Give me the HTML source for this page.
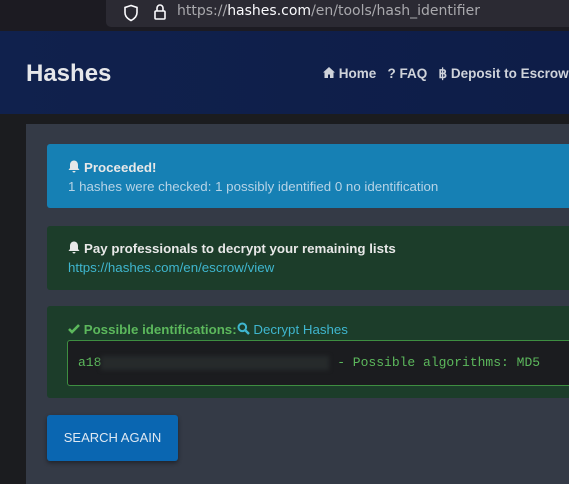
<!DOCTYPE html>
<html><head><style>
body{margin:0;width:569px;height:478px;overflow:hidden;background:#1b1c1f;font-family:"Liberation Sans",sans-serif;position:relative}
.bar{position:absolute;left:0;top:0;width:569px;height:31px;background:#1c1b22}
.url{position:absolute;left:106px;top:0;width:470px;height:27px;background:#2b2a33;border-radius:0 0 0 5px}
.url span{position:absolute;left:71px;top:3px;font-family:"DejaVu Sans",sans-serif;font-size:14px;color:#a9a9ad}
.url b{color:#fbfbfe;font-weight:normal}
.hdr{position:absolute;left:0;top:31px;width:569px;height:83px;background:linear-gradient(90deg,#10214d,#0e1d48);}
.logo{position:absolute;left:26px;top:60px;font-size:24px;font-weight:bold;color:#e6e7ea}
.nav{position:absolute;left:323px;top:66px;font-size:13.5px;font-weight:bold;color:#cfd3da;white-space:nowrap}
.panel{position:absolute;left:26px;top:124px;width:560px;height:360px;background:#343a46}
.al{position:absolute;left:47px;width:540px;border-radius:3px;font-size:13.3px}
.b{font-weight:bold;color:#e8e8e8}
.bell{display:inline-block;vertical-align:-1px;margin-right:4px}
</style></head><body>
<div class="bar"><div class="url">
<svg style="position:absolute;left:17px;top:4px" width="16" height="18" viewBox="0 0 16 18"><path d="M8 1.5L2 3.5v5c0 4 3 6.5 6 8 3-1.5 6-4 6-8v-5z" fill="none" stroke="#fbfbfe" stroke-width="1.6"/></svg>
<svg style="position:absolute;left:47px;top:3px" width="14" height="18" viewBox="0 0 14 18"><rect x="2" y="8" width="10" height="8" rx="1" fill="none" stroke="#fbfbfe" stroke-width="1.6"/><path d="M4 8V5a3 3 0 0 1 6 0v3" fill="none" stroke="#fbfbfe" stroke-width="1.6"/></svg>
<span>https://<b>hashes.com</b>/en/tools/hash_identifier</span></div></div>
<div class="hdr"></div>
<div class="logo">Hashes</div>
<div class="nav"><svg width="12" height="11" viewBox="0 0 12 11" style="vertical-align:0"><path d="M6 0L0 5.5h1.5V11h3.5V7.5h2V11h3.5V5.5H12z" fill="#cfd3da"/></svg> Home &nbsp;&nbsp;? FAQ &nbsp;&nbsp;฿ Deposit to Escrow</div>
<div class="panel"></div>
<div class="al" style="top:144px;height:64px;background:#1680b4">
<div style="position:absolute;left:21px;top:16px" class="b"><svg class="bell" width="12" height="13" viewBox="0 0 12 13"><path d="M6 0.5c-2.5 0-4 2-4 4.5v3L0.5 10h11L10 8V5c0-2.5-1.5-4.5-4-4.5z M4.5 11h3a1.5 1.5 0 0 1-3 0z" fill="#e8e8e8"/></svg>Proceeded!</div>
<div style="position:absolute;left:21px;top:35px;color:#b6d3e6">1 hashes were checked: 1 possibly identified 0 no identification</div></div>
<div class="al" style="top:226px;height:64px;background:#1c3d2a">
<div style="position:absolute;left:21px;top:15px" class="b"><svg class="bell" width="12" height="13" viewBox="0 0 12 13"><path d="M6 0.5c-2.5 0-4 2-4 4.5v3L0.5 10h11L10 8V5c0-2.5-1.5-4.5-4-4.5z M4.5 11h3a1.5 1.5 0 0 1-3 0z" fill="#e8e8e8"/></svg>Pay professionals to decrypt your remaining lists</div>
<div style="position:absolute;left:21px;top:34px;color:#3fb6cf">https://hashes.com/en/escrow/view</div></div>
<div class="al" style="top:306px;height:92px;background:#1c3d2a">
<div style="position:absolute;left:21px;top:16px;color:#5cb85c;font-weight:bold"><svg width="12" height="11" viewBox="0 0 12 11" style="vertical-align:0"><path d="M1 6l3 3 7-7" fill="none" stroke="#5cb85c" stroke-width="2.6"/></svg> Possible identifications:<svg width="13" height="13" viewBox="0 0 13 13" style="vertical-align:-1px"><circle cx="5.3" cy="5.3" r="3.8" fill="none" stroke="#3fb6cf" stroke-width="2"/><path d="M8 8l4 4" stroke="#3fb6cf" stroke-width="2.4"/></svg><span style="color:#3fb6cf;font-weight:normal"> Decrypt Hashes</span></div>
<div style="position:absolute;left:20px;top:34px;width:520px;height:44px;background:#1b1c1f;border:1px solid #3e8e41;border-radius:3px;font-family:'Liberation Mono',monospace;font-size:13px;color:#5cb85c">
<span style="position:absolute;left:10px;top:14px;white-space:nowrap">a18<span style="display:inline-block;width:228px;height:14px;background:#262a2b;vertical-align:middle;filter:blur(2px)"></span> - Possible algorithms: MD5</span></div></div>
<div style="position:absolute;left:47px;top:415px;width:131px;height:46px;background:#0a66b1;border-radius:3px;color:#dfe8f2;font-size:13px;line-height:46px;text-align:center;box-shadow:0 2px 4px rgba(0,0,0,.4)">SEARCH AGAIN</div>
</body></html>
